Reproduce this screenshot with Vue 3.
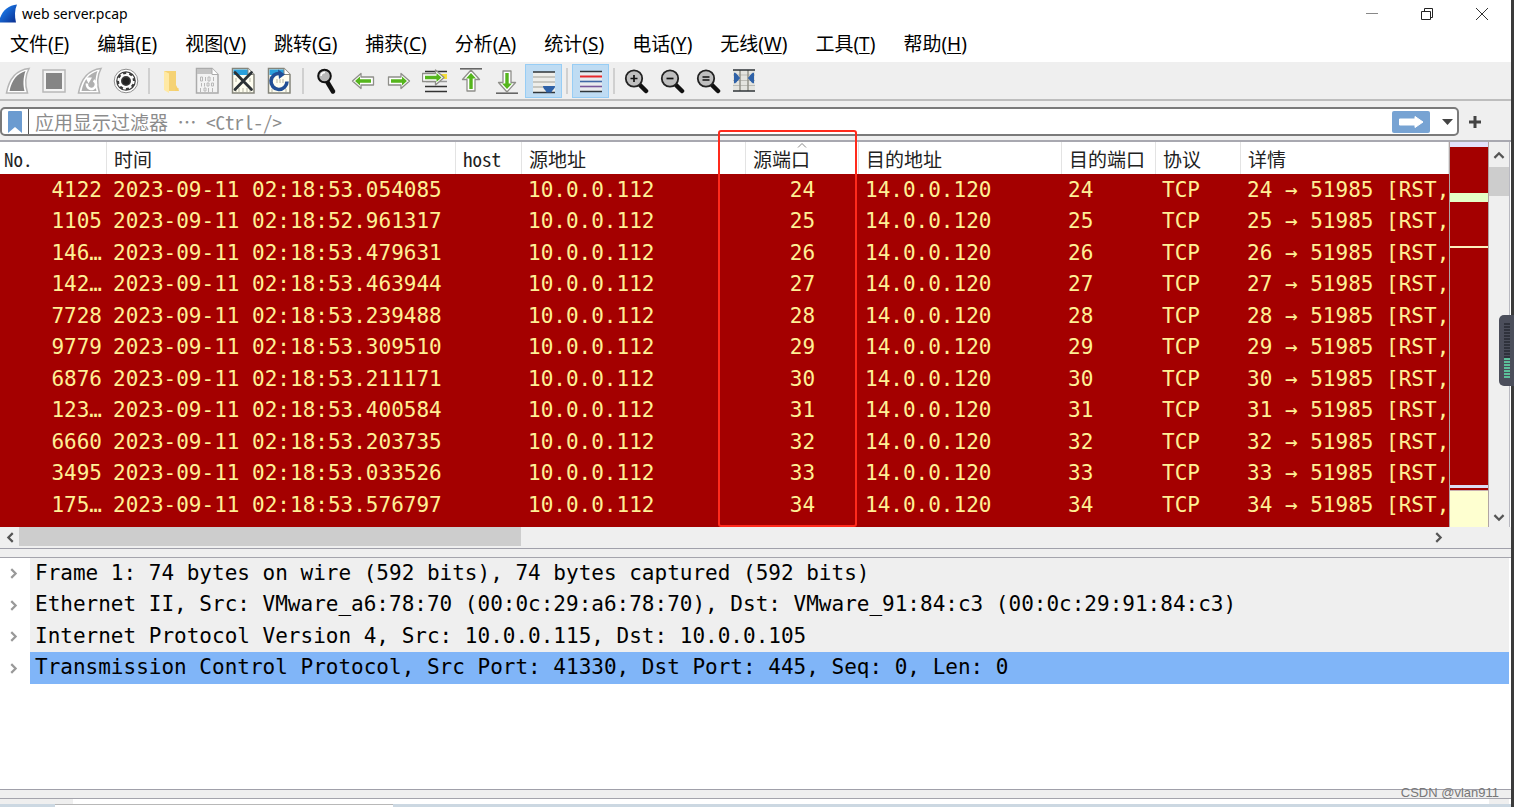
<script setup>
import { ref } from 'vue'

const menus = [
  ['文件', 'F'], ['编辑', 'E'], ['视图', 'V'], ['跳转', 'G'], ['捕获', 'C'], ['分析', 'A'],
  ['统计', 'S'], ['电话', 'Y'], ['无线', 'W'], ['工具', 'T'], ['帮助', 'H'],
]

const filter = ref('')

const packets = [
  ['4122', '02:18:53.054085'],
  ['1105', '02:18:52.961317'],
  ['146…', '02:18:53.479631'],
  ['142…', '02:18:53.463944'],
  ['7728', '02:18:53.239488'],
  ['9779', '02:18:53.309510'],
  ['6876', '02:18:53.211171'],
  ['123…', '02:18:53.400584'],
  ['6660', '02:18:53.203735'],
  ['3495', '02:18:53.033526'],
  ['175…', '02:18:53.576797'],
].map(([no, time], i) => ({ no, time: `2023-09-11 ${time}`, port: 24 + i }))

const layers = [
  'Frame 1: 74 bytes on wire (592 bits), 74 bytes captured (592 bits)',
  'Ethernet II, Src: VMware_a6:78:70 (00:0c:29:a6:78:70), Dst: VMware_91:84:c3 (00:0c:29:91:84:c3)',
  'Internet Protocol Version 4, Src: 10.0.0.115, Dst: 10.0.0.105',
  'Transmission Control Protocol, Src Port: 41330, Dst Port: 445, Seq: 0, Len: 0',
]
const selected = ref(3)
</script>

<template>
  <div class="desktop">
    <main class="window">
      <header class="titlebar">
        <svg class="logo" viewBox="0 0 17 19" aria-hidden="true">
          <defs>
            <linearGradient id="fin" x1="0" y1="0" x2="1" y2="1">
              <stop offset="0" stop-color="#1d8bff" /><stop offset="1" stop-color="#0a2c8c" />
            </linearGradient>
          </defs>
          <path d="M0 18.500V14C3 6 9 1 17 0.500C14.500 6 14.500 12 16 18.500Z" fill="url(#fin)" />
        </svg>
        <span class="title">web server.pcap</span>
        <div class="controls">
          <button type="button" aria-label="最小化"><svg viewBox="0 0 14 14"><path d="M1 6.500H13" stroke="#888" /></svg></button>
          <button type="button" aria-label="还原"><svg viewBox="0 0 14 14"><path d="M1.500 4.500H10.500V12.500H1.500ZM4.500 4V1.500H12.500V10.500H11" stroke="#222" /></svg></button>
          <button type="button" aria-label="关闭"><svg viewBox="0 0 14 14"><path d="M1 1L13 13M13 1L1 13" stroke="#333" /></svg></button>
        </div>
      </header>

      <nav class="menubar">
        <button v-for="[label, key] in menus" :key="key" type="button">{{ label }}(<u>{{ key }}</u>)</button>
      </nav>

      <div class="toolbar">
        <button type="button" aria-label="开始捕获">
          <svg viewBox="0 0 26 28"><path d="M1.500 26C4 12 11 3 24 1.500C20 9 20 18 22.500 26Z" fill="#fff" stroke="#b5b5b5" stroke-width="1.500" /><path d="M4.500 24C7 13 12 6.500 20.500 4C18 11 18 18 19.500 24Z" fill="#858585" /></svg>
        </button>
        <button type="button" aria-label="停止捕获">
          <svg viewBox="0 0 26 28"><rect x="2" y="3" width="22" height="22" fill="#f4f4f4" stroke="#b8b8b8" stroke-width="1.500" /><rect x="5" y="6" width="16" height="16" fill="#858585" /></svg>
        </button>
        <button type="button" aria-label="重新开始捕获">
          <svg viewBox="0 0 26 28"><path d="M1.500 26C4 12 11 3 24 1.500C20 9 20 18 22.500 26Z" fill="#fff" stroke="#b5b5b5" stroke-width="1.500" /><path d="M4.500 24C7 13 12 6.500 20.500 4C18 11 18 18 19.500 24Z" fill="#b0b0b0" /><path d="M10 16.500A4.500 4.500 0 1 0 16.500 13.500" fill="none" stroke="#fff" stroke-width="2.600" /><path d="M8.500 10.500L15 10.500L11.500 16.500Z" fill="#fff" /></svg>
        </button>
        <button type="button" aria-label="捕获选项">
          <svg viewBox="0 0 26 28"><circle cx="13" cy="14" r="11.800" fill="#fff" stroke="#909090" /><circle cx="13" cy="14" r="9.800" fill="#3c3c3c" /><circle cx="13" cy="14" r="6" fill="none" stroke="#fff" stroke-width="2" /><circle cx="13" cy="14" r="7.500" fill="none" stroke="#fff" stroke-width="2.200" stroke-dasharray="2.900 2.990" /><circle cx="13" cy="14" r="3.500" fill="#222" /></svg>
        </button>
        <i class="sep s9"></i>
        <button type="button" aria-label="打开">
          <svg viewBox="0 0 26 28"><path d="M6 4H18V21H20.500V24H9L6 22Z" fill="#f5d274" /><path d="M6 4L11 6.500V26L6 23Z" fill="#ffe9a4" /><path d="M18 18L21 24H17Z" fill="#f5cf6c" /></svg>
        </button>
        <button type="button" aria-label="保存">
          <svg viewBox="0 0 26 28"><path d="M2.500 1.500H18L24 7.500V26H2.500Z" fill="#f3f3f3" stroke="#ababab" stroke-width="1.500" /><path d="M3 2H18V7H3Z" fill="#c4c4c4" /><path d="M18 1.500V7.500H24" fill="#fff" stroke="#ababab" /><path d="M6.500 10h2v4h-2zM11.500 10v4M14 10h2v4h-2zM19.500 10v4M7.500 16v3.500M10.500 16v3.500M13 16h2v3h-2zM17.500 16h2v3h-2zM6.500 21v4M10 21h2v3h-2zM14.500 21v4M18.500 21v4" fill="none" stroke="#b8b8b8" /></svg>
        </button>
        <button type="button" aria-label="关闭文件">
          <svg viewBox="0 0 26 28"><path d="M2.500 1.500H18L24 7.500V26H2.500Z" fill="#fffef0" stroke="#85857b" stroke-width="1.500" /><path d="M3.500 2.500H18V8H3.500Z" fill="#2aa0dc" /><path d="M18 1.500V7.500H24" fill="#fff" stroke="#85857b" /><path d="M6 21v4M9 21v4M13 21v4M17 21v4M20 21v4M6 11v4M20 11v4" stroke="#b5b5a5" /><path d="M5 5.500L21.500 22.500M21.500 5.500L5 22.500" stroke="#2c3236" stroke-width="2.800" stroke-linecap="round" /></svg>
        </button>
        <button type="button" aria-label="重新加载">
          <svg viewBox="0 0 26 28"><path d="M2.500 1.500H18L24 7.500V26H2.500Z" fill="#fffef0" stroke="#85857b" stroke-width="1.500" /><path d="M3.500 2.500H18V8H3.500Z" fill="#2aa0dc" /><path d="M18 1.500V7.500H24" fill="#fff" stroke="#85857b" /><path d="M11 12v4M14 12v4M17 12v4M6 22v3M20 22v3" stroke="#b5b5a5" /><path d="M14 6.500A8 8 0 1 0 21 14.500" fill="none" stroke="#214f96" stroke-width="3.600" /><path d="M12 2.500L19 7.500L13 12Z" fill="#214f96" /></svg>
        </button>
        <i class="sep s12"></i>
        <button type="button" aria-label="查找">
          <svg viewBox="0 0 26 28"><path d="M13 14.500L19 24.500" stroke="#111" stroke-width="4.500" stroke-linecap="round" /><circle cx="10.500" cy="9" r="6.300" fill="#b9b9b9" stroke="#111" stroke-width="2" /><path d="M7 9A4 4 0 0 1 11 5.500" fill="none" stroke="#fff" stroke-width="1.500" /></svg>
        </button>
        <button type="button" aria-label="后退">
          <svg viewBox="0 0 26 28"><path d="M2.500 14L11 6.500V10H23.500V18H11V21.500Z" fill="#fff" stroke="#8f8f8a" stroke-width="1.300" stroke-linejoin="round" /><path d="M5 14L10 9.500V12.300H21V15.700H10V18.500Z" fill="#55b51d" /></svg>
        </button>
        <button type="button" aria-label="前进">
          <svg viewBox="0 0 26 28"><path d="M23.500 14L15 6.500V10H2.500V18H15V21.500Z" fill="#fff" stroke="#8f8f8a" stroke-width="1.300" stroke-linejoin="round" /><path d="M21 14L16 9.500V12.300H5V15.700H16V18.500Z" fill="#55b51d" /></svg>
        </button>
        <button type="button" aria-label="转到分组">
          <svg viewBox="0 0 26 28"><path d="M3 4.500H25M3 19.500H25M3 24.500H25" stroke="#333" stroke-width="1.600" /><path d="M18 9.500H25" stroke="#f5df3a" stroke-width="5" /><path d="M4 14.500H25" stroke="#999" stroke-width="1.500" /><path d="M22 10.500L13.500 3V6.500H0.500V14.500H13.500V18Z" fill="#fff" stroke="#8f8f8a" stroke-width="1.300" stroke-linejoin="round" /><path d="M19.500 10.500L14.500 6V8.800H3V12.200H14.500V15Z" fill="#55b51d" /></svg>
        </button>
        <button type="button" aria-label="首个分组">
          <svg viewBox="0 0 26 28"><path d="M2 1.800H24" stroke="#666" stroke-width="1.600" /><path d="M13 3L21.500 12.500H17V24H9V12.500H4.500Z" fill="#fff" stroke="#8f8f8a" stroke-width="1.300" stroke-linejoin="round" /><path d="M13 6L18 11.500H14.700V22H11.300V11.500H8Z" fill="#55b51d" /></svg>
        </button>
        <button type="button" aria-label="最新分组">
          <svg viewBox="0 0 26 28"><path d="M2 26.200H24" stroke="#666" stroke-width="1.600" /><path d="M13 25L21.500 15.500H17V4H9V15.500H4.500Z" fill="#fff" stroke="#8f8f8a" stroke-width="1.300" stroke-linejoin="round" /><path d="M13 22L18 16.500H14.700V6H11.300V16.500H8Z" fill="#55b51d" /></svg>
        </button>
        <button type="button" class="checked" aria-pressed="true" aria-label="自动滚动">
          <svg viewBox="0 0 26 28"><path d="M2 5H24V26H2Z" fill="#eeeeea" /><path d="M2 5H24M2 25.500H24" stroke="#30363a" stroke-width="1.600" /><path d="M2 10H24M2 15H24M2 20H24" stroke="#b9b9b3" stroke-width="1.300" /><path d="M12 19H24C24 22 21 23 20.500 25.500H15.500C15 23 12 22 12 19Z" fill="#2f62a8" /></svg>
        </button>
        <i class="sep s10"></i>
        <button type="button" class="checked" aria-pressed="true" aria-label="着色">
          <svg viewBox="0 0 26 28"><path d="M2 4H24V25H2Z" fill="#e8ebee" /><path d="M2 4.500H24M2 24.500H24" stroke="#30363a" stroke-width="1.600" /><path d="M2 9.500H24" stroke="#e8282b" stroke-width="2" /><path d="M2 14.500H24" stroke="#3f67a5" stroke-width="1.600" /><path d="M2 19.500H24" stroke="#77559a" stroke-width="1.600" /></svg>
        </button>
        <i class="sep s9"></i>
        <button v-for="mark in ['M8.500 10.500H15.500M12 7V14', 'M8.500 10.500H15.500', 'M8.500 9H15.500M8.500 12H15.500']" :key="mark" type="button" aria-label="缩放">
          <svg viewBox="0 0 26 28"><path d="M17 18L23 24" stroke="#111" stroke-width="4.500" stroke-linecap="round" /><circle cx="11" cy="11.500" r="8.200" fill="#bfbfbf" stroke="#222" stroke-width="1.800" /><path :d="mark" transform="translate(-1 1)" stroke="#111" stroke-width="1.700" /></svg>
        </button>
        <button type="button" aria-label="调整列宽">
          <svg viewBox="0 0 26 28"><path d="M2 3H24V24H2Z" fill="#e4e4df" /><path d="M2 8H24M2 13.500H24M2 18.500H24" stroke="#bcbcb6" stroke-width="1.200" /><path d="M9 3V24M17 3V24" stroke="#92928b" stroke-width="1.500" /><path d="M2 3H24M2 24H24" stroke="#30363a" stroke-width="1.600" /><path d="M3.500 6C5 6 7 9 8.500 11C7 13 5 16 3.500 16ZM22.500 6C21 6 19 9 17.500 11C19 13 21 16 22.500 16Z" fill="#2f62a8" stroke="#2f62a8" /></svg>
        </button>
      </div>

      <div class="filterbar">
        <div class="filter">
          <button type="button" class="bookmark" aria-label="书签">
            <svg viewBox="0 0 14 22"><path d="M0 1Q0 0 1 0H13Q14 0 14 1V22L7 16L0 22Z" fill="#6b9bd0" /></svg>
          </button>
          <input v-model="filter" type="text" aria-label="应用显示过滤器" placeholder="应用显示过滤器 ⋯ &lt;Ctrl-/&gt;" />
          <button type="button" class="apply" aria-label="应用">
            <svg viewBox="0 0 26 14"><path d="M1.500 4H17V1.500L25 7L17 12.500V10H1.500Z" fill="#fff" stroke="#fff" stroke-linejoin="round" /></svg>
          </button>
          <button type="button" class="drop" aria-label="最近使用">
            <svg viewBox="0 0 11 6"><path d="M0 0H11L5.500 6Z" fill="#444" /></svg>
          </button>
        </div>
        <button type="button" class="plus" aria-label="添加">
          <svg viewBox="0 0 14 14"><path d="M7 1V13M1 7H13" stroke="#444" stroke-width="3" /></svg>
        </button>
      </div>

      <section class="packets">
        <div class="list">
          <table>
            <colgroup>
              <col class="c1" /><col class="c2" /><col class="c3" /><col class="c4" /><col class="c5" />
              <col class="c6" /><col class="c7" /><col class="c8" /><col />
            </colgroup>
            <thead>
              <tr>
                <th class="first">No.</th><th>时间</th><th>host</th><th>源地址</th>
                <th class="sorted">源端口<svg viewBox="0 0 10 5"><path d="M1 4.500L5 0.500L9 4.500" fill="none" stroke="#888" /></svg></th>
                <th>目的地址</th><th>目的端口</th><th>协议</th><th>详情</th>
              </tr>
            </thead>
            <tbody>
              <tr v-for="p in packets" :key="p.no">
                <td class="no">{{ p.no }}</td>
                <td>{{ p.time }}</td>
                <td></td>
                <td>10.0.0.112</td>
                <td class="port">{{ p.port }}</td>
                <td>14.0.0.120</td>
                <td>{{ p.port }}</td>
                <td>TCP</td>
                <td>{{ p.port }} → 51985 [RST,</td>
              </tr>
            </tbody>
          </table>
        </div>
        <svg class="minimap" viewBox="0 0 38 385" preserveAspectRatio="none" aria-hidden="true">
          <rect width="38" height="385" fill="#a40000" />
          <rect width="38" height="5" fill="#e4e2fb" />
          <rect y="51" width="38" height="9" fill="#e4ffc7" />
          <rect y="104" width="38" height="2" fill="#fceebb" />
          <rect y="343" width="38" height="3" fill="#dcdcf2" />
          <rect y="348" width="38" height="1" fill="#c8b0b0" />
          <rect y="349" width="38" height="36" fill="#feffd0" />
        </svg>
        <div class="vscroll">
          <button type="button" class="up" aria-label="向上"><svg viewBox="0 0 10 7"><path d="M1 6L5 2L9 6" /></svg></button>
          <div class="vtrack"><div class="vthumb"></div></div>
          <button type="button" class="down" aria-label="向下"><svg viewBox="0 0 10 7"><path d="M1 1L5 5L9 1" /></svg></button>
        </div>
        <div class="mark"></div>
      </section>
      <div class="hscroll">
        <button type="button" aria-label="向左"><svg viewBox="0 0 7 10"><path d="M6 1L2 5L6 9" /></svg></button>
        <div class="htrack"><div class="hthumb"></div></div>
        <button type="button" aria-label="向右"><svg viewBox="0 0 7 10"><path d="M1 1L5 5L1 9" /></svg></button>
      </div>
      <div class="splitter"></div>

      <section class="details">
        <div v-for="(text, i) in layers" :key="text" class="layer" :class="{ on: i === selected }" @click="selected = i">
          <button type="button" aria-label="展开"><svg viewBox="0 0 7 10"><path d="M1 1L5 5L1 9" /></svg></button>
          <span>{{ text }}</span>
        </div>
      </section>
      <div class="splitter"></div>
      <div class="bytes"><i class="offset"></i><i class="corner"></i></div>
      <footer class="status"><i></i></footer>
    </main>

    <div class="meter" aria-hidden="true"><i></i><b></b></div>
    <div class="watermark">CSDN @vlan911</div>
  </div>
</template>

<style>
body { margin: 0; }
</style>

<style scoped>
.desktop {
  position: relative;
  display: flex;
  min-height: 100vh;
  padding-right: 3px;
  box-sizing: border-box;
  overflow: hidden;
  background: #3b3b3b;
  font-family: "Noto Sans", "Noto Sans CJK SC", sans-serif;
  color: #000;
}
.window {
  flex: 1;
  min-width: 0;
  display: flex;
  flex-direction: column;
  background: #fff;
}
button {
  display: flex;
  align-items: center;
  justify-content: center;
  flex: none;
  margin: 0;
  padding: 0;
  border: 0;
  background: none;
  color: inherit;
  font: inherit;
}
.titlebar { display: flex; align-items: center; height: 27px; }
.logo { width: 17px; height: 19px; }
.title { margin-left: 5px; font-size: 14px; line-height: 27px; }
.controls { display: flex; margin-left: auto; padding-right: 2px; }
.controls button { width: 55px; height: 27px; }
.controls svg { width: 14px; height: 14px; fill: none; }

.menubar { display: flex; gap: 28px; height: 35px; padding-left: 10px; font-size: 19px; line-height: 35px; white-space: nowrap; }
.menubar button { display: block; }
.menubar u { text-underline-offset: 2px; text-decoration-thickness: 1px; }

.toolbar { display: flex; align-items: center; height: 39px; padding-top: 1px; background: #efefef; box-sizing: border-box; border-bottom: 2px solid #bdbdbd; }
.toolbar button { width: 36px; height: 34px; box-sizing: border-box; }
.toolbar svg { flex: none; width: 26px; height: 28px; fill: none; }
.toolbar .checked { width: 37px; background: #bfdcf3; border: 1px solid #97cdf5; }
.sep { height: 26px; flex: none; background: linear-gradient(#d0d0d0, #d0d0d0) center / 2px 100% no-repeat; }
.s9 { width: 9px; }
.s10 { width: 10px; }
.s12 { width: 12px; }

.filterbar { display: flex; align-items: center; height: 41px; padding: 6px 0 4px; box-sizing: border-box; background: #efefef; border-bottom: 2px solid #a8a8b0; }
.filter { flex: 1; display: flex; align-items: center; height: 29px; box-sizing: border-box; border: 2px solid #7a7a7a; border-radius: 5px; background: #fff; }
.bookmark { width: 27px; height: 25px; border-right: 1px solid #555; }
.bookmark svg { width: 14px; height: 22px; }
.filter input {
  flex: 1;
  min-width: 0;
  height: 25px;
  padding: 0 6px;
  border: 0;
  outline: 0;
  background: none;
  font: 19px/25px "Noto Sans Mono CJK SC", "Liberation Mono", monospace;
}
.filter input::placeholder { color: #8c8c8c; opacity: 1; }
.apply { width: 38px; height: 22px; border-radius: 2px; background: #77a3d3; }
.apply svg { width: 26px; height: 14px; }
.drop { width: 27px; height: 25px; padding-left: 7px; }
.drop svg { width: 11px; height: 6px; }
.plus { width: 32px; height: 28px; margin-right: 20px; }
.plus svg { width: 14px; height: 14px; }

.packets { position: relative; display: flex; height: 385px; flex: none; }
.list { flex: 1; min-width: 0; overflow: hidden; background: #a40000; }
table { width: 100%; table-layout: fixed; border-collapse: separate; border-spacing: 0; }
.c1 { width: 107px; }
.c2 { width: 349px; }
.c3 { width: 66px; }
.c4 { width: 224px; }
.c5 { width: 113px; }
.c6 { width: 203px; }
.c7 { width: 94px; }
.c8 { width: 85px; }
th {
  height: 32px;
  padding: 0 0 0 7px;
  box-sizing: border-box;
  border-right: 1px solid #e3e3e3;
  background: #fff;
  color: #222;
  font: 19px/31px "Noto Sans Mono CJK SC", "Liberation Mono", monospace;
  text-align: left;
  white-space: nowrap;
}
th.first { padding-left: 4px; }
.sorted { position: relative; }
.sorted svg { position: absolute; left: 51px; top: 1px; width: 10px; height: 5px; }
td {
  height: 31px;
  padding: 0 0 0 6px;
  color: #fff095;
  font: 21px/31px "DejaVu Sans Mono", monospace;
  white-space: nowrap;
}
tbody tr:nth-child(odd) td { height: 32px; }
td.no { padding: 0 5px 0 0; text-align: right; }
td.port { padding: 0; text-align: center; }
.mark { position: absolute; left: 718px; top: -12px; width: 135px; height: 393px; border: 2px solid #ff2a1c; border-radius: 3px; }
.minimap { flex: none; width: 38px; height: 385px; border: 1px solid #b0a4a4; border-width: 0 1px; }

.vscroll { display: flex; flex-direction: column; width: 20px; margin-right: 1px; background: #efefef; border-right: 1px solid #b8b8c0; }
.up { height: 25px; }
.down { height: 19px; }
.vscroll svg { width: 12px; height: 8px; }
.vscroll path, .hscroll path { fill: none; stroke: #555; stroke-width: 2; }
.vtrack { flex: 1; }
.vthumb { height: 29px; background: #cdcdcd; }
.hscroll { display: flex; height: 21px; padding-right: 63px; background: #efefef; }
.hscroll button { width: 19px; }
.hscroll svg { width: 8px; height: 11px; }
.htrack { flex: 1; display: flex; }
.hthumb { width: 502px; height: 19px; background: #cdcdcd; }
.splitter { flex: none; height: 8px; background: #efefef; border-top: 1px solid #a0a0aa; border-bottom: 1px solid #a4a4ac; }

.details { flex: 1; padding-right: 2px; }
.layer { display: flex; height: 31px; font: 21px/31px "DejaVu Sans Mono", monospace; white-space: pre; }
.layer:nth-child(even) { height: 32px; }
.layer button { width: 30px; padding-right: 2px; box-sizing: border-box; }
.layer svg { width: 8px; height: 11px; }
.layer path { fill: none; stroke: #999; stroke-width: 2; }
.layer span { flex: 1; min-width: 0; padding-left: 5px; background: #efefef; overflow: hidden; }
.layer.on span { background: #80b5f8; }

.bytes { display: flex; justify-content: space-between; height: 5px; padding-right: 2px; }
.bytes i { background: #efefef; }
.offset { width: 73px; }
.corner { width: 20px; }
.status { height: 3px; padding-left: 55px; background: #ccd8e2; }
.status i { display: block; width: 338px; height: 2px; border-top: 1px solid #b8b8b8; background: #fff; }

.meter { position: absolute; right: 0; top: 315px; width: 15px; height: 71px; box-sizing: border-box; padding: 8px 3px 8px 5px; border-radius: 5px 0 0 5px; background: #4b4e5b; }
.meter i, .meter b { display: block; width: 6px; }
.meter i { height: 35px; background: repeating-linear-gradient(#2f323c 0 2px, #4b4e5b 2px 3px); }
.meter b { height: 20px; background: repeating-linear-gradient(#5cc09a 0 2px, #4b4e5b 2px 3px); }
.watermark { position: absolute; right: 15px; bottom: 5px; font: 13px/18px "Liberation Sans", sans-serif; color: #777; }
</style>
